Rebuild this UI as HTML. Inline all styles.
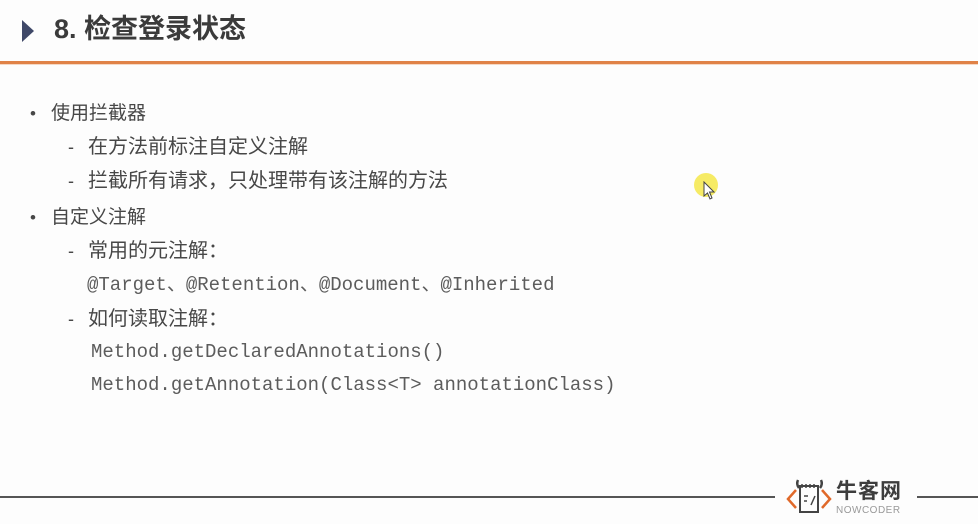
<!DOCTYPE html>
<html><head><meta charset="utf-8"><style>
html,body{margin:0;padding:0;width:978px;height:524px;overflow:hidden;background:#fdfdfd;}
body{position:relative;font-family:"Liberation Sans","Noto Sans CJK SC",sans-serif;color:#474747;}
.a{position:absolute;white-space:nowrap;line-height:1;}
.t{font-size:27px;font-weight:bold;color:#3b3b3b;left:54px;top:16px;}
.l1{font-size:19px;left:51px;}
.l2{font-size:20px;left:88px;}
.b{font-size:17px;left:30px;}
.d{font-size:18px;left:68px;}
.c{font-family:"Liberation Mono","Noto Sans CJK SC",monospace;font-size:19px;color:#5c5c5c;}
</style></head><body>
<svg class="a" style="left:20px;top:19px" width="15" height="25"><polygon points="2,1 14,12 2,23" fill="#3f4868"/></svg>
<div class="a t">8. 检查登录状态</div>
<div class="a" style="left:0;top:61px;width:978px;height:3px;background:#e08247"></div>
<div class="a" style="left:0;top:64px;width:978px;height:1px;background:#f6d8c4"></div>

<div class="a b" style="top:105px">•</div><div class="a l1" style="top:104px">使用拦截器</div>
<div class="a d" style="top:138px">-</div><div class="a l2" style="top:137px">在方法前标注自定义注解</div>
<div class="a d" style="top:172px">-</div><div class="a l2" style="top:171px">拦截所有请求，只处理带有该注解的方法</div>
<div class="a b" style="top:209px">•</div><div class="a l1" style="top:208px">自定义注解</div>
<div class="a d" style="top:242px">-</div><div class="a l2" style="top:241px">常用的元注解：</div>
<div class="a c" style="left:87px;top:276px">@Target、@Retention、@Document、@Inherited</div>
<div class="a d" style="top:310px">-</div><div class="a l2" style="top:309px">如何读取注解：</div>
<div class="a c" style="left:91px;top:343px">Method.getDeclaredAnnotations()</div>
<div class="a c" style="left:91px;top:376px">Method.getAnnotation(Class&lt;T&gt; annotationClass)</div>

<div class="a" style="left:694px;top:173px;width:24px;height:24px;border-radius:50%;background:#f5e84a;opacity:.85"></div>
<svg class="a" style="left:703px;top:181px" width="14" height="20"><path d="M1,1 L1,15 L4.5,12 L7,18 L9,17 L6.5,11 L11,11 Z" fill="#fff" stroke="#444" stroke-width="1"/></svg>

<div class="a" style="left:0;top:496px;width:775px;height:2px;background:#555"></div>
<div class="a" style="left:917px;top:496px;width:61px;height:2px;background:#555"></div>
<svg class="a" style="left:785px;top:478px" width="60" height="42">
<path d="M11,12 L3,21 L11,30" fill="none" stroke="#e0692a" stroke-width="2.5"/>
<path d="M37,12 L45,21 L37,30" fill="none" stroke="#e0692a" stroke-width="2.5"/>
<rect x="15" y="8" width="18" height="26" fill="none" stroke="#444" stroke-width="2"/>
<path d="M17,6 v4 M21,6 v4 M25,6 v4 M29,6 v4" stroke="#444" stroke-width="1.5"/>
<path d="M19,18 h4 M19,23 h3 M26,27 l4,-9" stroke="#444" stroke-width="1.5"/>
<path d="M13,2 q-2,4 1,8 M36,2 q2,4 -1,8" fill="none" stroke="#444" stroke-width="2.5"/>
</svg>
<div class="a" style="left:836px;top:481px;font-size:21px;font-weight:bold;color:#3d3d3d;letter-spacing:1px">牛客网</div>
<div class="a" style="left:836px;top:506px;font-size:10px;color:#999;letter-spacing:.5px">NOWCODER</div>
</body></html>
